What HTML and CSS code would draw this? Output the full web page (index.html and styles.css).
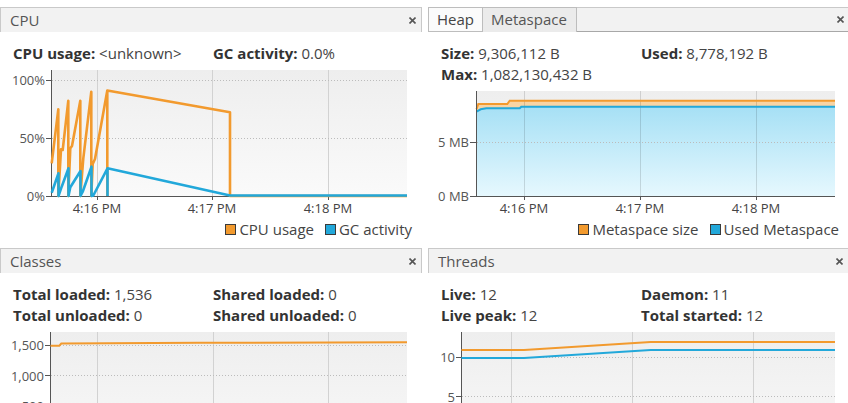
FILE: index.html
```html
<!DOCTYPE html>
<html>
<head>
<meta charset="utf-8">
<link rel="stylesheet" href="styles.css">
</head>
<body>
<div class="dash">
  <section class="panel">
    <header class="ph">
      <span class="pt">CPU</span>
      <svg class="close" viewBox="0 0 7 7"><path d="M0.5 0.5L6.5 6.5M6.5 0.5L0.5 6.5"/></svg>
    </header>
    <div class="stats">
      <div><b>CPU usage:</b> &lt;unknown&gt;</div>
      <div class="c2"><b>GC activity:</b> 0.0%</div>
    </div>
    <svg class="chart" width="422" height="154" viewBox="0 64 422 154">
      <defs>
        <linearGradient id="g1" x1="0" y1="0" x2="0" y2="1">
          <stop offset="0" stop-color="#eeeeee"/>
          <stop offset="1" stop-color="#fafafa"/>
        </linearGradient>
      </defs>
      <rect x="52" y="70" width="355" height="126" fill="url(#g1)"/>
      <g class="vgrid"><path d="M97.5 70V196M212.5 70V196M328.5 70V196"/></g>
      <g class="hgrid"><path d="M52 80.5H407M52 138.5H407"/></g>
      <g class="axis"><path d="M51.5 70V197M51 196.5H407M46 80.5H51M46 138.5H51M46 196.5H51M97.5 197V200M212.5 197V200M328.5 197V200"/></g>
      <g class="ylab">
        <text x="45" y="85">100%</text>
        <text x="45" y="143">50%</text>
        <text x="45" y="201">0%</text>
      </g>
      <g class="xlab">
        <text x="97" y="213">4:16 PM</text>
        <text x="212" y="213">4:17 PM</text>
        <text x="328" y="213">4:18 PM</text>
      </g>
      <path class="ln or" d="M51.7 163.3L58.3 109.3L58.3 196L61 149.3L62.7 150L68.3 100.7L68.3 196L70.3 148.3L72 146L80.3 100.7L80.3 196L83.3 158.3L91.3 91.7L91.3 196L92.7 164L95 159L107.3 90.5L107.3 196M107.3 90.5L230 112.3L230 196L407 196"/>
      <path class="ln bl" d="M51.7 192.7L58.5 173.3L58.5 196L61.7 186.7L68.5 168.3L68.5 196L70.3 187.3L80.5 171L80.5 196L82.7 191.7L91.5 166.7L91.5 196L93.3 195.5L107.5 168.3L107.5 196M107.5 168.3L230 195.5L407 195.5"/>
    </svg>
    <div class="legend">
      <span class="key"><i class="sw or"></i>CPU usage</span>
      <span class="key"><i class="sw bl"></i>GC activity</span>
    </div>
  </section>

  <section class="panel">
    <header class="ph tabbed">
      <div class="tab heap">Heap</div>
      <div class="tab active">Metaspace</div>
      <div class="strip">
        <svg class="close" viewBox="0 0 7 7"><path d="M0.5 0.5L6.5 6.5M6.5 0.5L0.5 6.5"/></svg>
      </div>
    </header>
    <div class="stats">
      <div><b>Size:</b> 9,306,112 B</div>
      <div class="c2"><b>Used:</b> 8,778,192 B</div>
      <div><b>Max:</b> 1,082,130,432 B</div>
    </div>
    <svg class="chart" width="421" height="133" viewBox="428 85 421 133">
      <defs>
        <linearGradient id="g2" x1="0" y1="0" x2="0" y2="1">
          <stop offset="0" stop-color="#eeeeee"/>
          <stop offset="1" stop-color="#fafafa"/>
        </linearGradient>
        <linearGradient id="gb" x1="0" y1="0" x2="0" y2="1">
          <stop offset="0" stop-color="#a6e0f5"/>
          <stop offset="1" stop-color="#e6f8fe"/>
        </linearGradient>
      </defs>
      <rect x="477" y="91" width="358" height="105" fill="url(#g2)"/>
      <path fill="#f8d4a4" d="M476.5 109.3L478.3 104L507.3 104L509.7 100.7L835 100.7L835 196L476.5 196Z"/>
      <path fill="url(#gb)" d="M476.5 111.7L480.7 109.3L486.3 108.3L519.7 108.3L521.3 106.7L835 106.7L835 196L476.5 196Z"/>
      <g class="vgrid t"><path d="M524.5 91V196M640.5 91V196M756.5 91V196"/></g>
      <g class="hgrid"><path d="M477 142.5H835"/></g>
      <path class="ln2 or" d="M476.5 109.3L478.3 104L507.3 104L509.7 100.7L835 100.7"/>
      <path class="ln2 bl" d="M476.5 111.7L480.7 109.3L486.3 108.3L519.7 108.3L521.3 106.7L835 106.7"/>
      <g class="axis"><path d="M476.5 91V197M476 196.5H835M470 142.5H476M470 196.5H476M524.5 197V200M640.5 197V200M756.5 197V200"/></g>
      <g class="ylab">
        <text x="469" y="147">5 MB</text>
        <text x="469" y="201">0 MB</text>
      </g>
      <g class="xlab">
        <text x="524" y="213">4:16 PM</text>
        <text x="640" y="213">4:17 PM</text>
        <text x="756" y="213">4:18 PM</text>
      </g>
    </svg>
    <div class="legend">
      <span class="key"><i class="sw or"></i>Metaspace size</span>
      <span class="key"><i class="sw bl"></i>Used Metaspace</span>
    </div>
  </section>

  <section class="panel">
    <header class="ph">
      <span class="pt">Classes</span>
      <svg class="close" viewBox="0 0 7 7"><path d="M0.5 0.5L6.5 6.5M6.5 0.5L0.5 6.5"/></svg>
    </header>
    <div class="stats">
      <div><b>Total loaded:</b> 1,536</div>
      <div class="c2"><b>Shared loaded:</b> 0</div>
      <div><b>Total unloaded:</b> 0</div>
      <div class="c2"><b>Shared unloaded:</b> 0</div>
    </div>
    <svg class="chart" width="422" height="80" viewBox="0 326 422 80">
      <defs>
        <linearGradient id="g3" x1="0" y1="0" x2="0" y2="1">
          <stop offset="0" stop-color="#eeeeee"/>
          <stop offset="1" stop-color="#f5f5f5"/>
        </linearGradient>
      </defs>
      <rect x="51" y="332" width="356" height="80" fill="url(#g3)"/>
      <g class="vgrid"><path d="M97.5 332V412M213.5 332V412M328.5 332V412"/></g>
      <g class="hgrid"><path d="M51 345.5H407M51 375.5H407M51 406.5H407"/></g>
      <g class="axis"><path d="M50.5 332V412M45 345.5H50M45 375.5H50M45 406.5H50"/></g>
      <g class="ylab">
        <text x="44" y="350">1,500</text>
        <text x="44" y="380.5">1,000</text>
        <text x="44" y="411">500</text>
      </g>
      <path class="ln2 or" d="M50.5 345.7L59.3 345.7L61.3 343.5L200 342.8L407 342.2"/>
    </svg>
  </section>

  <section class="panel">
    <header class="ph">
      <span class="pt">Threads</span>
      <svg class="close" viewBox="0 0 7 7"><path d="M0.5 0.5L6.5 6.5M6.5 0.5L0.5 6.5"/></svg>
    </header>
    <div class="stats">
      <div><b>Live:</b> 12</div>
      <div class="c2"><b>Daemon:</b> 11</div>
      <div><b>Live peak:</b> 12</div>
      <div class="c2"><b>Total started:</b> 12</div>
    </div>
    <svg class="chart" width="421" height="80" viewBox="428 326 421 80">
      <defs>
        <linearGradient id="g4" x1="0" y1="0" x2="0" y2="1">
          <stop offset="0" stop-color="#eeeeee"/>
          <stop offset="1" stop-color="#f5f5f5"/>
        </linearGradient>
      </defs>
      <rect x="462" y="332" width="373" height="80" fill="url(#g4)"/>
      <g class="vgrid"><path d="M511.5 332V412M632.5 332V412M753.5 332V412"/></g>
      <g class="hgrid"><path d="M462 357.5H835M462 396.5H835"/></g>
      <g class="axis"><path d="M461.5 332V412M456 357.5H461M456 396.5H461"/></g>
      <g class="ylab">
        <text x="455" y="362">10</text>
        <text x="455" y="401.5">5</text>
      </g>
      <path class="ln2 or" d="M461.5 350L524 350L650.7 342L835 342"/>
      <path class="ln2 bl" d="M461.5 358L524 358L650.7 350L835 350"/>
    </svg>
  </section>
</div>
</body>
</html>
```

FILE: styles.css
```css
* { box-sizing: border-box; }
html, body { margin: 0; padding: 0; }
body {
  width: 848px;
  height: 403px;
  overflow: hidden;
  background: #ffffff;
  font-family: "Open Sans", "DejaVu Sans", sans-serif;
  color: #333333;
}
.dash {
  display: grid;
  grid-template-columns: 422px 421px;
  grid-template-rows: 241px 155px;
  column-gap: 6px;
  padding-top: 7px;
}
.panel {
  display: flex;
  flex-direction: column;
  min-width: 0;
  overflow: hidden;
}
.ph {
  height: 25px;
  flex: none;
  display: flex;
  align-items: center;
  justify-content: space-between;
  background: #f2f2f2;
  border: 1px solid #c9c9c9;
  border-bottom: 0;
  padding: 0 5px 0 9px;
}
.pt {
  font-size: 15px;
  line-height: 24px;
  color: #555555;
}
.close {
  width: 7px;
  height: 7px;
  display: block;
}
.close path {
  stroke: #555555;
  stroke-width: 1.6;
  fill: none;
}
.ph.tabbed {
  padding: 0;
  border: 0;
  background: none;
  align-items: stretch;
  justify-content: flex-start;
}
.tab {
  font-size: 15px;
  line-height: 23px;
  border: 1px solid #bdbdbd;
  padding: 0 0 0 8px;
  white-space: nowrap;
}
.tab.heap {
  width: 55px;
  background: #fbfbfb;
  color: #444444;
}
.tab.active {
  width: 94px;
  background: #ebebeb;
  color: #555555;
  border-left: 0;
  border-bottom: 0;
}
.strip {
  flex: 1;
  background: #f2f2f2;
  border-top: 1px solid #c9c9c9;
  border-bottom: 1px solid #a8a8a8;
  display: flex;
  align-items: center;
  justify-content: flex-end;
  padding-right: 5px;
}
.stats {
  flex: none;
  display: grid;
  grid-template-columns: 200px auto;
  padding: 11px 0 0 13px;
  font-size: 15px;
  line-height: 21px;
  color: #444444;
  white-space: nowrap;
}
.stats b {
  color: #333333;
  font-weight: 700;
}
.chart {
  display: block;
  flex: none;
}
.vgrid path {
  stroke: #d2d2d2;
  stroke-width: 1;
  fill: none;
}
.vgrid.t path {
  stroke: rgba(0, 0, 0, 0.13);
}
.hgrid path {
  stroke: #bcbcbc;
  stroke-width: 1;
  stroke-dasharray: 1 2;
  fill: none;
}
.axis path {
  stroke: #555555;
  stroke-width: 1;
  fill: none;
}
.ylab text {
  font-family: "Open Sans", "DejaVu Sans", sans-serif;
  font-size: 13px;
  fill: #555555;
  text-anchor: end;
}
.xlab text {
  font-family: "Open Sans", "DejaVu Sans", sans-serif;
  font-size: 13px;
  fill: #444444;
  text-anchor: middle;
}
.ln {
  fill: none;
  stroke-width: 2.6;
  stroke-linejoin: round;
}
.ln2 {
  fill: none;
  stroke-width: 2;
}
.ln.or, .ln2.or { stroke: #f29a2e; }
.ln.bl, .ln2.bl { stroke: #22a8da; }
.legend {
  flex: none;
  height: 22px;
  display: flex;
  justify-content: flex-end;
  align-items: center;
  gap: 11px;
  padding-right: 10px;
  font-size: 15px;
  color: #444444;
}
.key {
  display: flex;
  align-items: center;
  white-space: nowrap;
}
.sw {
  display: inline-block;
  width: 11px;
  height: 11px;
  border: 1px solid #3a3a3a;
  margin-right: 3px;
}
.sw.or { background: #f29a2e; }
.sw.bl { background: #22a8da; }
```
